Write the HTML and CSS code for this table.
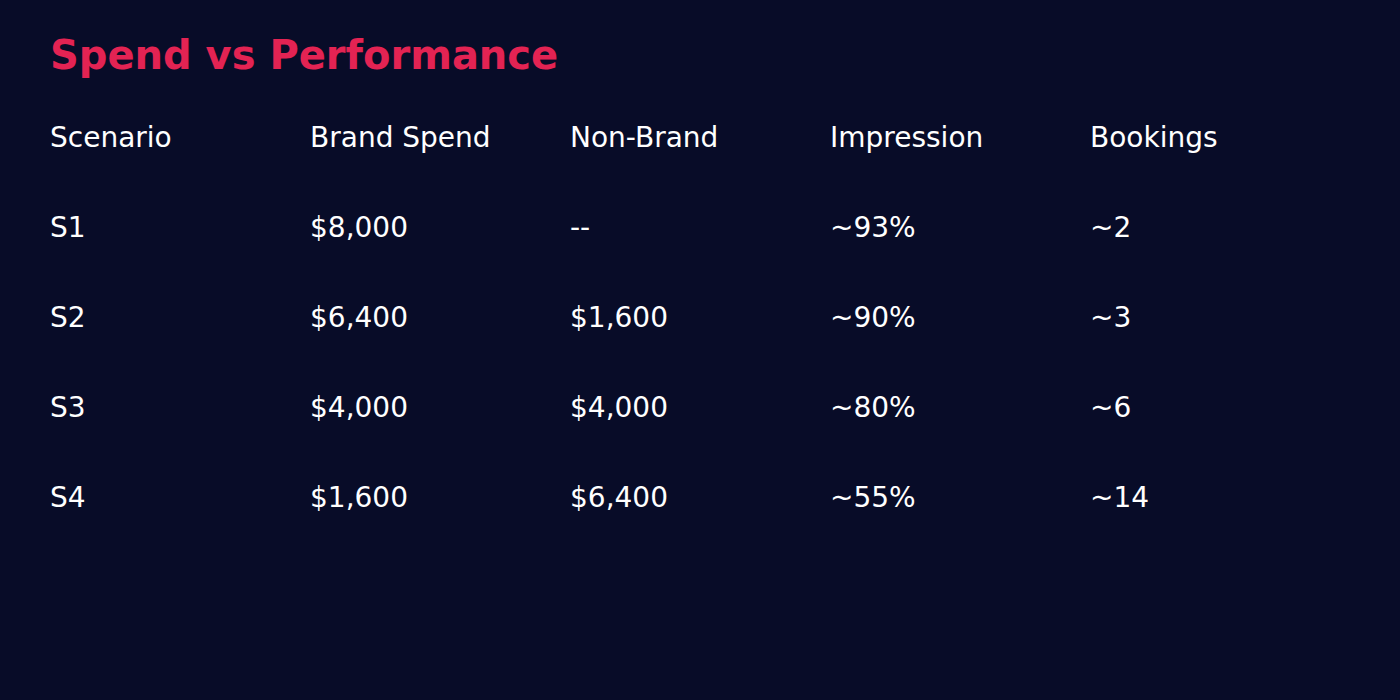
FILE: index.html
```html
<!DOCTYPE html>
<html>
<head>
<meta charset="utf-8">
<link rel="stylesheet" href="styles.css">
</head>
<body>
<div class="page">
  <h1 class="title">Spend vs Performance</h1>
  <div class="table">
    <div class="row head"><span>Scenario</span><span>Brand Spend</span><span>Non-Brand</span><span>Impression</span><span>Bookings</span></div>
    <div class="row"><span>S1</span><span>$8,000</span><span>--</span><span>~93%</span><span>~2</span></div>
    <div class="row"><span>S2</span><span>$6,400</span><span>$1,600</span><span>~90%</span><span>~3</span></div>
    <div class="row"><span>S3</span><span>$4,000</span><span>$4,000</span><span>~80%</span><span>~6</span></div>
    <div class="row"><span>S4</span><span>$1,600</span><span>$6,400</span><span>~55%</span><span>~14</span></div>
  </div>
</div>
</body>
</html>
```
FILE: styles.css
```css
html, body {
  margin: 0;
  padding: 0;
  background: #080c28;
  width: 1400px;
  height: 700px;
  overflow: hidden;
}
.page {
  padding: 30px 50px;
  font-family: "DejaVu Sans", sans-serif;
  color: #ffffff;
}
.title {
  margin: 0;
  font-size: 40px;
  font-weight: bold;
  color: #e32353;
  line-height: 50px;
}
.table {
  margin-top: 43px;
}
.row {
  display: grid;
  grid-template-columns: repeat(5, 260px);
  height: 90px;
  font-size: 28px;
  line-height: 30px;
}
```
